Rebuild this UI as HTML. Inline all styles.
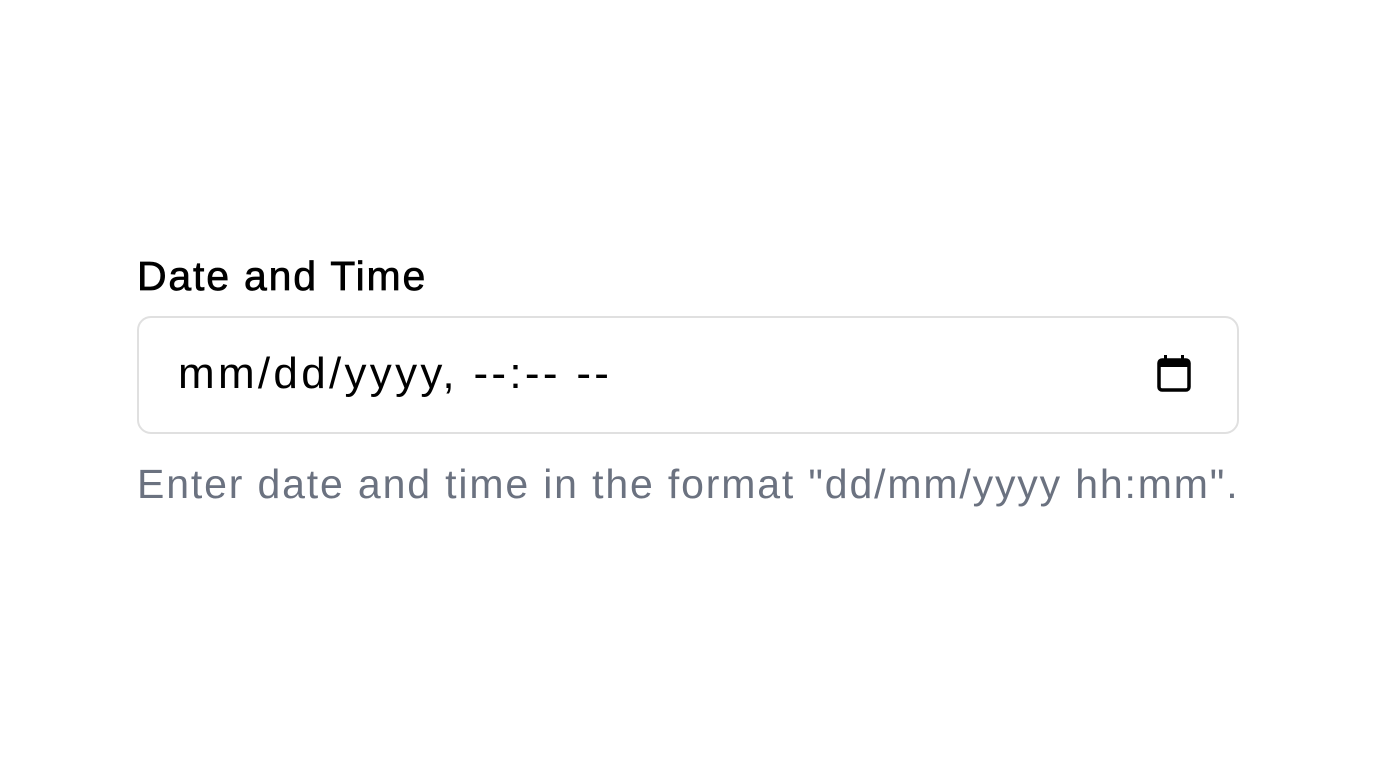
<!DOCTYPE html>
<html><head><style>
html,body{margin:0;padding:0;background:#fff;width:1376px;height:768px;overflow:hidden;font-family:"Liberation Sans",sans-serif;}
.label{position:absolute;left:137px;top:253px;font-size:41px;color:#000;white-space:nowrap;letter-spacing:1.8px;-webkit-text-stroke:0.7px #000;}
.box{position:absolute;left:137px;top:316px;width:1098px;height:114px;border:2px solid #e0e0e0;border-radius:14px;}
.val{position:absolute;left:178px;top:349px;font-size:44px;color:#000;white-space:nowrap;letter-spacing:3.3px;}
.help{position:absolute;left:137px;top:461px;font-size:41px;color:#6b7280;white-space:nowrap;letter-spacing:1.85px;}
svg{position:absolute;left:1155px;top:354px;}
</style></head><body>
<div class="label">Date and Time</div>
<div class="box"></div>
<div class="val">mm/dd/yyyy, --:-- --</div>
<svg width="38" height="40" viewBox="0 0 38 40"><rect x="4" y="6" width="30" height="30" rx="3" fill="none" stroke="#000" stroke-width="3.5"/><rect x="4" y="6" width="30" height="7" fill="#000"/><rect x="9" y="1" width="3" height="7" fill="#000"/><rect x="26" y="1" width="3" height="7" fill="#000"/></svg>
<div class="help">Enter date and time in the format "dd/mm/yyyy hh:mm".</div>
</body></html>
